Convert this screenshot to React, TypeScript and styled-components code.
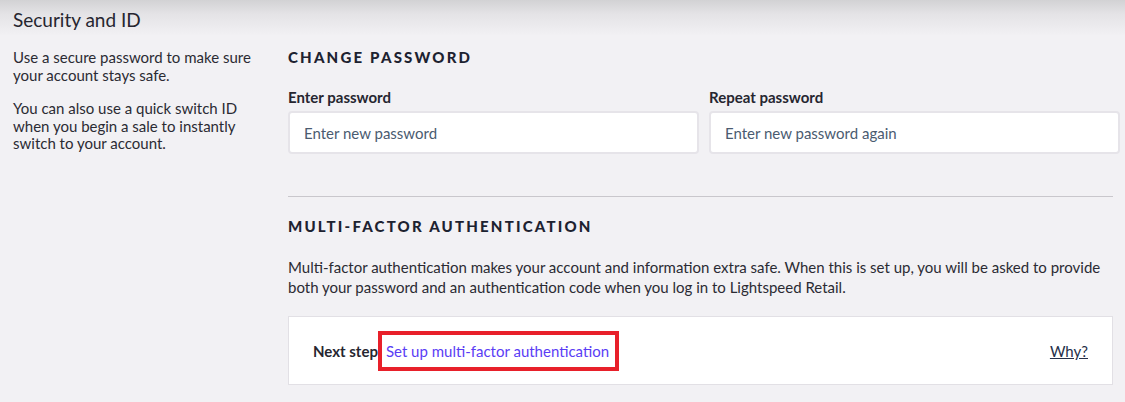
import React from "react";
import styled, { createGlobalStyle } from "styled-components";

const GlobalStyle = createGlobalStyle`
  html, body { margin: 0; padding: 0; }
  body {
    font-family: Lato, "Open Sans", sans-serif;
    background: #f2f1f4;
    color: #2b2b33;
  }
  * { box-sizing: border-box; }
`;

const Page = styled.div`
  width: 1125px;
  height: 402px;
  overflow: hidden;
  background: linear-gradient(to bottom, #d2d2d4 0px, #e4e3e6 14px, #f2f1f4 36px, #f2f1f4 100%);
  padding: 8px 12px 0 13px;
`;

const Title = styled.h1`
  margin: 0;
  font-size: 19px;
  line-height: 24px;
  font-weight: 400;
  color: #262630;
`;

const Layout = styled.div`
  display: grid;
  grid-template-columns: 275px 1fr;
  margin-top: 17px;
`;

const Aside = styled.div`
  width: 240px;
`;

const AsideText = styled.p`
  margin: 0 0 16px;
  font-size: 15px;
  line-height: 17.5px;
  color: #2b2b33;
`;

const Main = styled.div`
  display: flex;
  flex-direction: column;
`;

const SectionHeading = styled.h2`
  margin: 0;
  font-size: 15px;
  line-height: 16px;
  font-weight: 900;
  letter-spacing: 2.2px;
  color: #1d2230;
  text-transform: uppercase;
`;

const Fields = styled.div`
  display: grid;
  grid-template-columns: 1fr 1fr;
  gap: 10px;
  margin-top: 23px;
  margin-right: -7px;
`;

const Field = styled.label`
  display: flex;
  flex-direction: column;
  gap: 5px;
`;

const FieldLabel = styled.span`
  font-size: 15px;
  line-height: 18px;
  font-weight: 700;
  color: #262630;
`;

const Input = styled.input`
  height: 43px;
  border: 2px solid #e6e4e9;
  border-radius: 4px;
  background: #fff;
  padding: 0 14px;
  font-family: Lato, sans-serif;
  font-size: 15px;
  color: #2b2b33;
  outline: none;
  &::placeholder {
    color: #4a5b70;
  }
`;

const Divider = styled.hr`
  border: 0;
  border-top: 1px solid #c9c7cc;
  margin: 42px 0 21px;
  width: 100%;
`;

const Description = styled.p`
  margin: 23px 0 0;
  font-size: 15px;
  line-height: 20px;
  color: #2b2b33;
`;

const StepCard = styled.div`
  margin-top: 19px;
  height: 69px;
  background: #fff;
  border: 1px solid #e2e0e5;
  display: flex;
  align-items: center;
  padding: 0 24px;
`;

const StepLabel = styled.span`
  font-size: 15px;
  font-weight: 700;
  color: #262630;
`;

const Highlight = styled.span`
  border: 4px solid #e8202a;
  padding: 7px 6px 7px 4px;
  display: inline-flex;
`;

const StepLink = styled.a`
  font-size: 15px;
  color: #5a3df5;
  text-decoration: none;
`;

const WhyLink = styled.a`
  margin-left: auto;
  font-size: 15px;
  color: #26304a;
  text-decoration: underline;
`;

export default function App() {
  return (
    <>
      <GlobalStyle />
      <Page>
        <Title>Security and ID</Title>
        <Layout>
          <Aside>
            <AsideText>Use a secure password to make sure your account stays safe.</AsideText>
            <AsideText>
              You can also use a quick switch ID when you begin a sale to instantly switch to your account.
            </AsideText>
          </Aside>
          <Main>
            <SectionHeading>Change password</SectionHeading>
            <Fields>
              <Field>
                <FieldLabel>Enter password</FieldLabel>
                <Input type="password" placeholder="Enter new password" />
              </Field>
              <Field>
                <FieldLabel>Repeat password</FieldLabel>
                <Input type="password" placeholder="Enter new password again" />
              </Field>
            </Fields>
            <Divider />
            <SectionHeading>Multi-factor authentication</SectionHeading>
            <Description>
              Multi-factor authentication makes your account and information extra safe. When this is set up, you will be asked to provide both your password and an authentication code when you log in to Lightspeed Retail.
            </Description>
            <StepCard>
              <StepLabel>Next step</StepLabel>
              <Highlight>
                <StepLink href="#">Set up multi-factor authentication</StepLink>
              </Highlight>
              <WhyLink href="#">Why?</WhyLink>
            </StepCard>
          </Main>
        </Layout>
      </Page>
    </>
  );
}
